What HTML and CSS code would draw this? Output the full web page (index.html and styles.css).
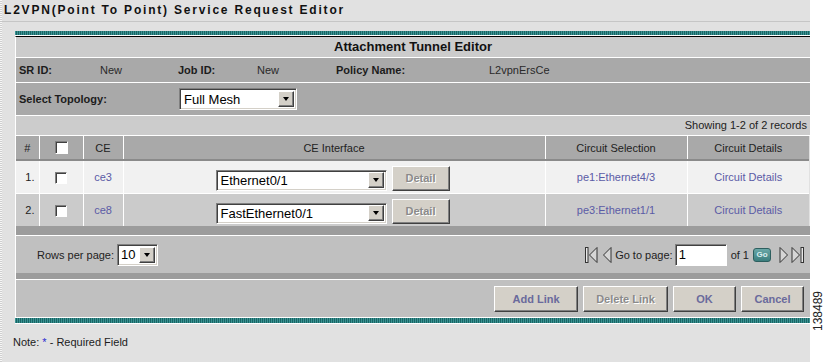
FILE: index.html
```html
<!DOCTYPE html>
<html lang="en">
<head>
	<meta charset="UTF-8">
	<title>L2VPN Service Request Editor</title>
	<link rel="stylesheet" href="styles.css">
</head>
<body>
	<div class="screen">
		<div class="page">
			<div class="title">L2VPN(Point To Point) Service Request Editor</div>
			<div class="editor">
				<div class="stripe top"></div>
				<div class="panel">
					<div class="panel-head">Attachment Tunnel Editor</div>
					<div class="info">
						<b>SR ID:</b><span>New</span>
						<b>Job ID:</b><span>New</span>
						<b>Policy Name:</b><span>L2vpnErsCe</span>
					</div>
					<div class="topology">
						<b class="topo-label">Select Topology:</b>
						<div class="select topo">Full Mesh<span class="arrow"></span></div>
					</div>
					<div class="showing">Showing 1-2 of 2 records</div>
					<table class="grid">
						<colgroup>
							<col style="width:23px">
							<col style="width:44px">
							<col style="width:40px">
							<col style="width:422px">
							<col style="width:142px">
							<col style="width:122px">
						</colgroup>
						<thead>
							<tr>
								<th>#</th>
								<th><span class="check head"></span></th>
								<th>CE</th>
								<th>CE Interface</th>
								<th>Circuit Selection</th>
								<th>Circuit Details</th>
							</tr>
						</thead>
						<tbody>
							<tr class="odd">
								<td class="num">1.</td>
								<td><span class="check"></span></td>
								<td><a href="#">ce3</a></td>
								<td>
									<div class="iface">
										<div class="select ifsel">Ethernet0/1<span class="arrow"></span></div>
										<span class="btn small disabled">Detail</span>
									</div>
								</td>
								<td><a href="#">pe1:Ethernet4/3</a></td>
								<td><a href="#">Circuit Details</a></td>
							</tr>
							<tr class="even">
								<td class="num">2.</td>
								<td><span class="check"></span></td>
								<td><a href="#">ce8</a></td>
								<td>
									<div class="iface">
										<div class="select ifsel">FastEthernet0/1<span class="arrow"></span></div>
										<span class="btn small disabled">Detail</span>
									</div>
								</td>
								<td><a href="#">pe3:Ethernet1/1</a></td>
								<td><a href="#">Circuit Details</a></td>
							</tr>
						</tbody>
					</table>
					<div class="band"></div>
					<div class="pager">
						<div class="rows">Rows per page: <div class="select rpp">10<span class="arrow"></span></div></div>
						<div class="nav">
							<svg class="ico first" width="13" height="18" viewBox="0 0 13 18"><rect x="0.5" y="1.5" width="2.5" height="15" fill="#e8e8e8" stroke="#333"/><path d="M12 1.5 L4.5 9 L12 16.5 Z" fill="#d6d6d6" stroke="#333"/></svg>
							<svg class="ico prev" width="10" height="18" viewBox="0 0 10 18"><path d="M9 1.5 L1.5 9 L9 16.5 Z" fill="#d6d6d6" stroke="#333"/></svg>
							<span class="goto">Go to page:</span>
							<div class="pageinput">1</div>
							<span class="of">of 1</span>
							<span class="go">Go</span>
							<svg class="ico next" width="10" height="18" viewBox="0 0 10 18"><path d="M1 1.5 L8.5 9 L1 16.5 Z" fill="#d6d6d6" stroke="#333"/></svg>
							<svg class="ico last" width="13" height="18" viewBox="0 0 13 18"><path d="M1 1.5 L8.5 9 L1 16.5 Z" fill="#d6d6d6" stroke="#333"/><rect x="10" y="1.5" width="2.5" height="15" fill="#e8e8e8" stroke="#333"/></svg>
						</div>
					</div>
					<div class="band thin"></div>
					<div class="actions">
						<span class="btn add">Add Link</span>
						<span class="btn del disabled">Delete Link</span>
						<span class="btn ok">OK</span>
						<span class="btn cancel">Cancel</span>
					</div>
				</div>
				<div class="stripe bottom"></div>
			</div>
			<div class="note">Note: <span class="req">*</span> - Required Field</div>
		</div>
		<div class="figno">138489</div>
	</div>
</body>
</html>
```

FILE: styles.css
```css
body{
	margin: 0;
	padding: 0;
	background: #fff;
	font-family: "Liberation Sans", Arial, sans-serif;
	font-size: 11px;
	color: #1c1c1c;
}
.screen{
	position: relative;
	width: 824px;
	height: 362px;
}
.page{
	width: 810px;
	height: 362px;
	background:
		repeating-linear-gradient(180deg, #f6f6f6 0 1px, #cfcfcf 1px 2px) no-repeat 0 0 / 2px 100%,
		#e1e1e1;
}
.title{
	height: 21px;
	line-height: 21px;
	padding-left: 4px;
	border-bottom: 1px solid #c6c6c6;
	font-size: 12px;
	font-weight: bold;
	letter-spacing: 1.8px;
	color: #111;
}
.editor{
	margin: 9px 0 0 15px;
}
.stripe{
	height: 5px;
	background: repeating-linear-gradient(90deg, #3a9494 0 1px, #1b6464 1px 2px);
}
.stripe.top{
	height: 4px;
	border-bottom: 1px solid #fff;
}
.stripe.bottom{
	border-top: 1px solid #fff;
	border-bottom: 1px solid #fff;
}
.panel{
	border-top: 1px solid #000;
	border-left: 1px solid #fff;
}
.panel-head{
	height: 20px;
	line-height: 20px;
	background: #cccccc;
	border-bottom: 1px solid #fff;
	text-align: center;
	font-size: 13px;
	font-weight: bold;
	color: #111;
}
.info{
	display: grid;
	grid-template-columns: 81px 78px 79px 79px 153px 1fr;
	align-items: center;
	height: 24px;
	padding-left: 3px;
	background: #a9a9a9;
	border-bottom: 1px solid #fff;
}
.info span{ color: #2a2a2a;}
.topology{
	display: flex;
	align-items: center;
	height: 32px;
	padding-left: 3px;
	background: #a9a9a9;
	border-bottom: 1px solid #fff;
}
.topo-label{ width: 160px;}
.showing{
	height: 19px;
	line-height: 19px;
	text-align: right;
	padding-right: 3px;
	background: #cccccc;
	border-bottom: 1px solid #fff;
	color: #222;
}
/* fake windows selects */
.select{
	display: inline-flex;
	align-items: center;
	justify-content: space-between;
	box-sizing: border-box;
	background: #fff;
	border: 1px solid;
	border-color: #808080 #fff #fff #808080;
	box-shadow: inset 1px 1px 0 #404040, inset -1px -1px 0 #d4d0c8;
	padding: 0 2px 0 4px;
	font-size: 13px;
	color: #000;
}
.select .arrow{
	position: relative;
	width: 16px;
	height: 16px;
	box-sizing: border-box;
	background: #d4d0c8;
	border: 1px solid;
	border-color: #fff #404040 #404040 #fff;
	box-shadow: inset -1px -1px 0 #808080;
}
.select .arrow:after{
	content: "";
	position: absolute;
	left: 4px;
	top: 5px;
	border-left: 3.5px solid transparent;
	border-right: 3.5px solid transparent;
	border-top: 4px solid #000;
}
.select.topo{ width: 118px; height: 22px;}
.select.ifsel{ width: 171px; height: 21px;}
.select.rpp{ width: 41px; height: 22px; padding-left: 3px;}
.grid{
	width: 793px;
	border-collapse: collapse;
	table-layout: fixed;
}
.grid th,.grid td{
	padding: 0;
	text-align: center;
	border-left: 1px solid #fff;
}
.grid th:first-child,.grid td:first-child{ border-left: 0;}
.grid th{
	height: 23px;
	background: #a9a9a9;
	font-weight: normal;
	color: #222;
	border-bottom: 2px solid #8a8a8a;
}
.grid td{ height: 32px;}
.grid tr.odd td{ background: #f1f1f1; border-bottom: 1px solid #fff;}
.grid tr.even td{ background: #cbcbcb;}
.grid td.num{
	text-align: right;
	padding-right: 4px;
	color: #222;
}
.grid a{
	color: #5b5ba6;
	text-decoration: none;
}
.check{
	display: inline-block;
	width: 12px;
	height: 12px;
	box-sizing: border-box;
	background: #fff;
	border: 1px solid;
	border-color: #808080 #fff #fff #808080;
	box-shadow: inset 1px 1px 0 #404040;
	vertical-align: middle;
}
.check.head{ width: 13px; height: 13px;}
.iface{
	display: flex;
	justify-content: center;
	align-items: flex-end;
	gap: 5px;
	padding-top: 2px;
	margin-left: -3px;
}
.btn{
	display: inline-flex;
	align-items: center;
	justify-content: center;
	box-sizing: border-box;
	height: 26px;
	background: #d4d0c8;
	border: 1px solid;
	border-color: #fff #404040 #404040 #fff;
	box-shadow: inset -1px -1px 0 #808080;
	font-weight: bold;
	font-size: 11px;
	white-space: nowrap;
	color: #6a6a9c;
}
.btn.small{ width: 58px; height: 25px;}
.btn.disabled{
	color: #8a8a8a;
	text-shadow: 1px 1px 0 #fff;
}
.band{
	height: 9px;
	background: #9c9c9c;
	border-bottom: 1px solid #fff;
}
.band.thin{ height: 6px;}
.pager{
	display: flex;
	align-items: center;
	justify-content: space-between;
	height: 37px;
	padding: 0 6px 0 21px;
	background: #c0c0c0;
}
.rows{
	display: flex;
	align-items: center;
	gap: 3px;
	color: #222;
}
.nav{
	display: flex;
	align-items: center;
	color: #222;
}
.ico.first{ margin-right: 4px;}
.ico.prev{ margin-right: 3px;}
.ico.next{ margin-right: 2px;}
.goto{ margin-right: 2px;}
.pageinput{
	box-sizing: border-box;
	width: 52px;
	height: 22px;
	padding: 2px 3px;
	background: #fff;
	border: 1px solid;
	border-color: #808080 #fff #fff #808080;
	box-shadow: inset 1px 1px 0 #404040;
	font-size: 13px;
	color: #000;
}
.of{ margin: 0 4px;}
.go{
	box-sizing: border-box;
	width: 18px;
	height: 14px;
	margin-right: 8px;
	line-height: 12px;
	text-align: center;
	border-radius: 3px;
	border: 1px solid #2d5f5f;
	background: linear-gradient(#6aa8a8, #3b7e7e);
	font-size: 8px;
	font-weight: bold;
	color: #d8eef0;
}
.actions{
	display: flex;
	justify-content: flex-end;
	align-items: center;
	gap: 5px;
	height: 37px;
	padding-right: 6px;
	background: #c0c0c0;
}
.actions .btn.add{ width: 84px;}
.actions .btn.del{ width: 85px;}
.actions .btn.ok{ width: 63px;}
.actions .btn.cancel{ width: 63px;}
.note{
	margin: 12px 0 0 13px;
	line-height: 13px;
	color: #1c1c1c;
}
.req{ color: #2a2ad0;}
.figno{
	position: absolute;
	left: 811px;
	top: 291px;
	writing-mode: vertical-rl;
	transform: rotate(180deg);
	font-size: 12px;
	color: #222;
}
```
